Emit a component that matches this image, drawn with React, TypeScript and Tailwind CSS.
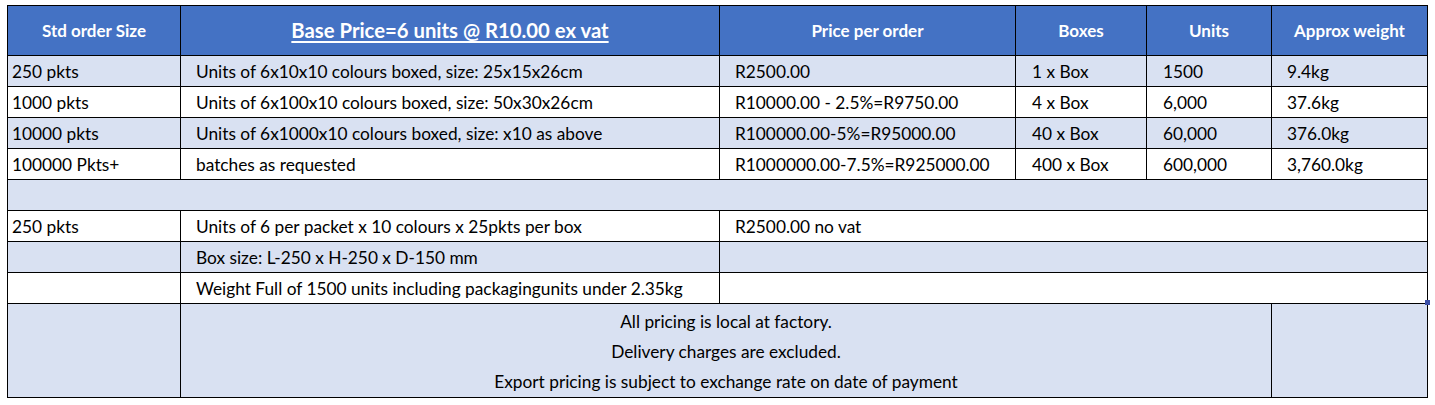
const font = { fontFamily: "Lato, 'Open Sans', sans-serif" };

type Row = {
  size: string;
  desc: string;
  price: string;
  boxes: string;
  units: string;
  weight: string;
  light: boolean;
};

const rows: Row[] = [
  { size: "250 pkts", desc: "Units of 6x10x10 colours boxed, size: 25x15x26cm", price: "R2500.00", boxes: "1 x Box", units: "1500", weight: "9.4kg", light: true },
  { size: "1000 pkts", desc: "Units of 6x100x10 colours boxed, size: 50x30x26cm", price: "R10000.00 - 2.5%=R9750.00", boxes: "4 x Box", units: "6,000", weight: "37.6kg", light: false },
  { size: "10000 pkts", desc: "Units of 6x1000x10 colours boxed, size: x10 as above", price: "R100000.00-5%=R95000.00", boxes: "40 x Box", units: "60,000", weight: "376.0kg", light: true },
  { size: "100000 Pkts+", desc: "batches as requested", price: "R1000000.00-7.5%=R925000.00", boxes: "400 x Box", units: "600,000", weight: "3,760.0kg", light: false },
];

const cell = "h-[31px] border border-black p-0 pt-[2px] align-middle whitespace-nowrap";
const head = "h-[50px] border border-black text-center text-[17px] font-bold";

export default function App() {
  return (
    <div className="min-h-[405px] w-[1435px] bg-white pl-[7px] pt-[5px] text-[17.3px] text-black" style={font}>
      <table className="table-fixed border-collapse">
        <colgroup>
          <col className="w-[173px]" />
          <col className="w-[539px]" />
          <col className="w-[296px]" />
          <col className="w-[131px]" />
          <col className="w-[125px]" />
          <col className="w-[156px]" />
        </colgroup>
        <thead>
          <tr className="bg-[#4472c4] text-white">
            <th className={head}>Std order Size</th>
            <th className="h-[50px] border border-black text-center text-[20.3px] font-bold underline underline-offset-[3px]">
              Base Price=6 units @ R10.00 ex vat
            </th>
            <th className={head}>Price per order</th>
            <th className={head}>Boxes</th>
            <th className={head}>Units</th>
            <th className={head}>Approx weight</th>
          </tr>
        </thead>
        <tbody>
          {rows.map((r) => (
            <tr key={r.size} className={r.light ? "bg-[#d9e1f2]" : "bg-white"}>
              <td className={`${cell} pl-[4px]`}>{r.size}</td>
              <td className={`${cell} pl-[15px]`}>{r.desc}</td>
              <td className={`${cell} pl-[15px]`}>{r.price}</td>
              <td className={`${cell} pl-[16px]`}>{r.boxes}</td>
              <td className={`${cell} pl-[16px]`}>{r.units}</td>
              <td className={`${cell} pl-[15px]`}>{r.weight}</td>
            </tr>
          ))}
          <tr className="bg-[#d9e1f2]">
            <td colSpan={6} className={cell}></td>
          </tr>
          <tr className="bg-white">
            <td className={`${cell} pl-[4px]`}>250 pkts</td>
            <td className={`${cell} pl-[15px]`}>Units of 6 per packet x 10 colours x 25pkts per box</td>
            <td colSpan={4} className={`${cell} pl-[15px]`}>R2500.00 no vat</td>
          </tr>
          <tr className="bg-[#d9e1f2]">
            <td className={cell}></td>
            <td className={`${cell} pl-[15px]`}>Box size: L-250 x H-250 x D-150 mm</td>
            <td colSpan={4} className={cell}></td>
          </tr>
          <tr className="bg-white">
            <td className={cell}></td>
            <td className={`${cell} pl-[15px]`}>Weight Full of 1500 units including packagingunits under 2.35kg</td>
            <td colSpan={4} className={`${cell} relative`}>
              <span className="absolute -bottom-[2px] -right-[3px] h-[5px] w-[5px] bg-[#3b4fa8]" />
            </td>
          </tr>
          <tr className="bg-[#d9e1f2]">
            <td className="h-[93px] border border-black p-0"></td>
            <td colSpan={4} className="h-[93px] border border-black p-0 text-center align-top">
              <div className="flex flex-col pt-[3px]">
                <span className="leading-[30px]">All pricing is local at factory.</span>
                <span className="leading-[30px]">Delivery charges are excluded.</span>
                <span className="leading-[30px]">Export pricing is subject to exchange rate on date of payment</span>
              </div>
            </td>
            <td className="h-[93px] border border-black p-0"></td>
          </tr>
        </tbody>
      </table>
    </div>
  );
}
